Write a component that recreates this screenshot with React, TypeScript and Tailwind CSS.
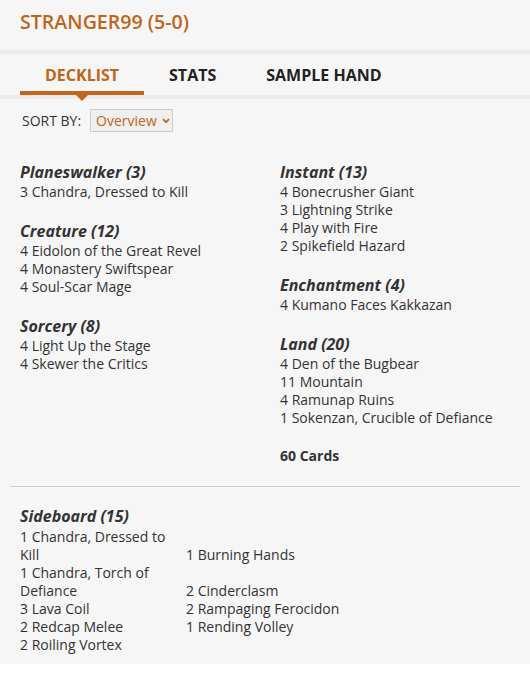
import React from 'react';

type Section = { title: string; cards: string[] };

const leftCol: Section[] = [
  { title: 'Planeswalker (3)', cards: ['3 Chandra, Dressed to Kill'] },
  { title: 'Creature (12)', cards: ['4 Eidolon of the Great Revel', '4 Monastery Swiftspear', '4 Soul-Scar Mage'] },
  { title: 'Sorcery (8)', cards: ['4 Light Up the Stage', '4 Skewer the Critics'] },
];

const rightCol: Section[] = [
  { title: 'Instant (13)', cards: ['4 Bonecrusher Giant', '3 Lightning Strike', '4 Play with Fire', '2 Spikefield Hazard'] },
  { title: 'Enchantment (4)', cards: ['4 Kumano Faces Kakkazan'] },
  { title: 'Land (20)', cards: ['4 Den of the Bugbear', '11 Mountain', '4 Ramunap Ruins', '1 Sokenzan, Crucible of Defiance'] },
];

const sideboard = [
  '1 Chandra, Dressed to Kill',
  '1 Burning Hands',
  '1 Chandra, Torch of Defiance',
  '2 Cinderclasm',
  '3 Lava Coil',
  '2 Rampaging Ferocidon',
  '2 Redcap Melee',
  '1 Rending Volley',
  '2 Roiling Vortex',
];

const SectionBlock = ({ s }: { s: Section }) => (
  <div className="mb-[20px]">
    <h3 className="text-[16px] leading-[21px] font-bold italic text-[#333]">{s.title}</h3>
    <ul>
      {s.cards.map((c) => (
        <li key={c} className="text-[14px] leading-[18px] text-[#333]">{c}</li>
      ))}
    </ul>
  </div>
);

const App: React.FC = () => {
  return (
    <div className="bg-white min-h-screen" style={{ fontFamily: '"Open Sans", sans-serif' }}>
      <div className="bg-[#f6f6f6] pb-[10px]">
        <div className="px-5 pt-[8px] pb-[14px]">
          <h1 className="text-[19.6px] leading-[28px] font-semibold text-[#c0651a]">STRANGER99 (5-0)</h1>
        </div>
        <div className="h-[4px] bg-[#ebebeb]" />

        <div className="flex px-5 pt-[10px]">
          <div className="relative px-[25px] pb-[5px] border-b-[4px] border-[#c0651a] text-[16px] leading-[22px] font-bold text-[#c0651a]">
            DECKLIST
            <span className="absolute left-1/2 -translate-x-1/2 top-full mt-[4px] w-0 h-0 border-l-[6px] border-r-[6px] border-t-[6px] border-l-transparent border-r-transparent border-t-[#c0651a]" />
          </div>
          <div className="px-[25px] pb-[9px] text-[16px] leading-[22px] font-bold text-[#222]">STATS</div>
          <div className="px-[25px] pb-[9px] text-[16px] leading-[22px] font-bold text-[#222]">SAMPLE HAND</div>
        </div>
        <div className="h-[4px] bg-[#ebebeb]" />

        <div className="flex items-center gap-[9px] px-[22px] pt-[10px]">
          <span className="text-[14px] font-medium text-[#333]">SORT BY:</span>
          <div className="flex items-center gap-[3px] h-[23px] w-[83px] pl-[5px] bg-[#efefef] border border-[#cccccc] text-[14px] text-[#c0651a]">
            Overview
            <svg width="8" height="6" viewBox="0 0 8 6" className="ml-[2px]">
              <path d="M1 1.2 L4 4.2 L7 1.2" fill="none" stroke="#c0651a" strokeWidth="1.8" />
            </svg>
          </div>
        </div>

        <div className="grid grid-cols-[260px_1fr] px-5 pt-[30px]">
          <div>
            {leftCol.map((s) => <SectionBlock key={s.title} s={s} />)}
          </div>
          <div>
            {rightCol.map((s) => <SectionBlock key={s.title} s={s} />)}
            <p className="text-[14px] leading-[18px] font-bold text-[#333] mt-[3px]">60 Cards</p>
          </div>
        </div>

        <hr className="mx-[10px] mt-[21px] border-t border-[#cccccc]" />

        <div className="px-5 pt-[19px]">
          <h3 className="text-[16px] leading-[21px] font-bold italic text-[#333] mb-[1px]">Sideboard (15)</h3>
          <ul className="grid grid-cols-[166px_166px] items-end">
            {sideboard.map((c) => (
              <li key={c} className="text-[14px] leading-[18px] text-[#333] pr-[10px]">{c}</li>
            ))}
          </ul>
        </div>
      </div>
    </div>
  );
};

export default App;
